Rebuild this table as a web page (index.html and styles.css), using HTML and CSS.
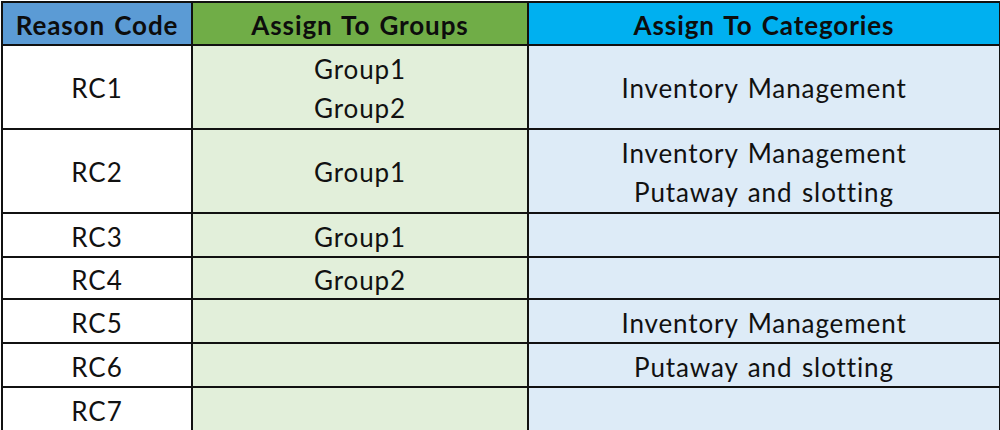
FILE: index.html
```html
<!DOCTYPE html>
<html>
<head>
<meta charset="utf-8">
<link rel="stylesheet" href="styles.css">
</head>
<body>
<table class="grid">
  <colgroup>
    <col class="c1"><col class="c2"><col class="c3">
  </colgroup>
  <thead>
    <tr class="head">
      <th class="h1">Reason Code</th>
      <th class="h2">Assign To Groups</th>
      <th class="h3">Assign To Categories</th>
    </tr>
  </thead>
  <tbody>
    <tr class="tall">
      <td class="code">RC1</td>
      <td class="grp">Group1<br>Group2</td>
      <td class="cat">Inventory Management</td>
    </tr>
    <tr class="tall">
      <td class="code">RC2</td>
      <td class="grp">Group1</td>
      <td class="cat">Inventory Management<br>Putaway and slotting</td>
    </tr>
    <tr class="short">
      <td class="code">RC3</td>
      <td class="grp">Group1</td>
      <td class="cat"></td>
    </tr>
    <tr class="short s42">
      <td class="code">RC4</td>
      <td class="grp">Group2</td>
      <td class="cat"></td>
    </tr>
    <tr class="short">
      <td class="code">RC5</td>
      <td class="grp"></td>
      <td class="cat">Inventory Management</td>
    </tr>
    <tr class="short">
      <td class="code">RC6</td>
      <td class="grp"></td>
      <td class="cat sel">Putaway and slotting</td>
    </tr>
    <tr class="short">
      <td class="code">RC7</td>
      <td class="grp"></td>
      <td class="cat"></td>
    </tr>
  </tbody>
</table>
</body>
</html>
```
FILE: styles.css
```css
html, body {
  margin: 0;
  padding: 0;
  background: #ffffff;
}
body {
  padding: 1px 0 0 1px;
  font-family: Lato, "Liberation Sans", sans-serif;
  color: #111111;
}
.grid {
  border-collapse: collapse;
  table-layout: fixed;
  width: 998px;
}
.c1 { width: 190px; }
.c2 { width: 336px; }
.c3 { width: 472px; }
.grid th, .grid td {
  border: 2px solid #111111;
  text-align: center;
  vertical-align: middle;
  padding: 3px 0 0 0;
  font-size: 26px;
  line-height: 39px;
  letter-spacing: 0.9px;
  word-spacing: 2px;
}
.grid th {
  font-weight: 700;
  height: 38px;
  line-height: 34px;
  color: #0d0d0d;
  letter-spacing: 0.9px;
}
.h1 { background: #5b9bd5; }
.h2 { background: #70ad47; }
.h3 { background: #00b0f0; }
.code { background: #ffffff; }
.grp { background: #e2efda; }
.cat { background: #ddebf7; position: relative; }
.tall td { height: 79px; }
.short td { height: 39px; line-height: 34px; }
.short.s42 td { height: 37px; }
.sel::after {
  content: "";
  position: absolute;
  right: -3px;
  top: -1px;
  bottom: -1px;
  width: 2px;
  background: #217346;
}
```
